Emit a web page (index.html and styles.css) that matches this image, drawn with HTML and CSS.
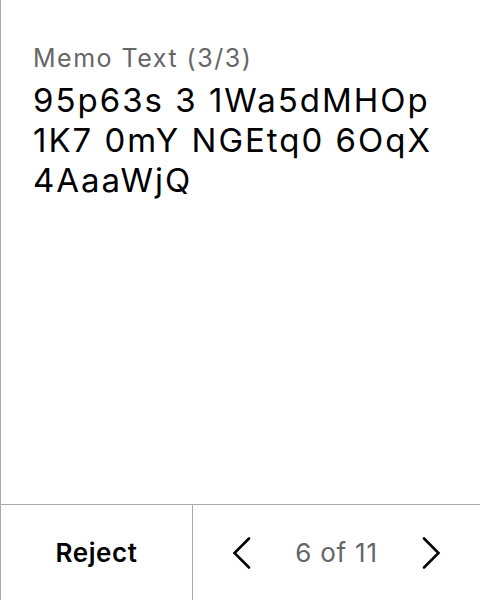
FILE: index.html
```html
<!DOCTYPE html>
<html>
<head>
<meta charset="utf-8">
<link rel="stylesheet" href="styles.css">
</head>
<body>
<div class="screen">
  <div class="content">
    <div class="label">Memo Text (3/3)</div>
    <div class="memo">95p63s 3 1Wa5dMHOp 1K7 0mY NGEtq0 6OqX 4AaaWjQ</div>
  </div>
  <div class="bar">
    <div class="reject">Reject</div>
    <div class="pager">
      <svg class="chev" width="24" height="36" viewBox="0 0 24 36"><path d="M19 3.5 L4.5 18 L19 32.5" fill="none" stroke="#000" stroke-width="2.6" stroke-linecap="round" stroke-linejoin="miter"/></svg>
      <span class="count">6 of 11</span>
      <svg class="chev" width="24" height="36" viewBox="0 0 24 36"><path d="M5 3.5 L19.5 18 L5 32.5" fill="none" stroke="#000" stroke-width="2.6" stroke-linecap="round" stroke-linejoin="miter"/></svg>
    </div>
  </div>
</div>
</body>
</html>
```
FILE: styles.css
```css
html, body { margin: 0; padding: 0; background: #fff; }
body { font-family: Inter, "Noto Sans", sans-serif; }
.screen {
  width: 480px; height: 600px; box-sizing: border-box;
  border-left: 1px solid #aaa;
  display: flex; flex-direction: column;
}
.content { flex: 1; padding: 42px 20px 0 32px; }
.label { font-size: 25px; color: #666; line-height: 32px; letter-spacing: 1.5px; }
.memo { font-size: 33px; color: #000; line-height: 40px; margin-top: 6px; letter-spacing: 2px; }
.bar {
  height: 95px; border-top: 1px solid #aaa;
  display: flex;
}
.reject {
  width: 191px; border-right: 1px solid #aaa;
  display: flex; align-items: center; justify-content: center;
  font-size: 26px; font-weight: 600; color: #000; letter-spacing: 0.6px;
}
.pager {
  flex: 1; display: flex; align-items: center; justify-content: center; gap: 41px;
}
.count { font-size: 26px; color: #666; letter-spacing: 0.8px; }
```
